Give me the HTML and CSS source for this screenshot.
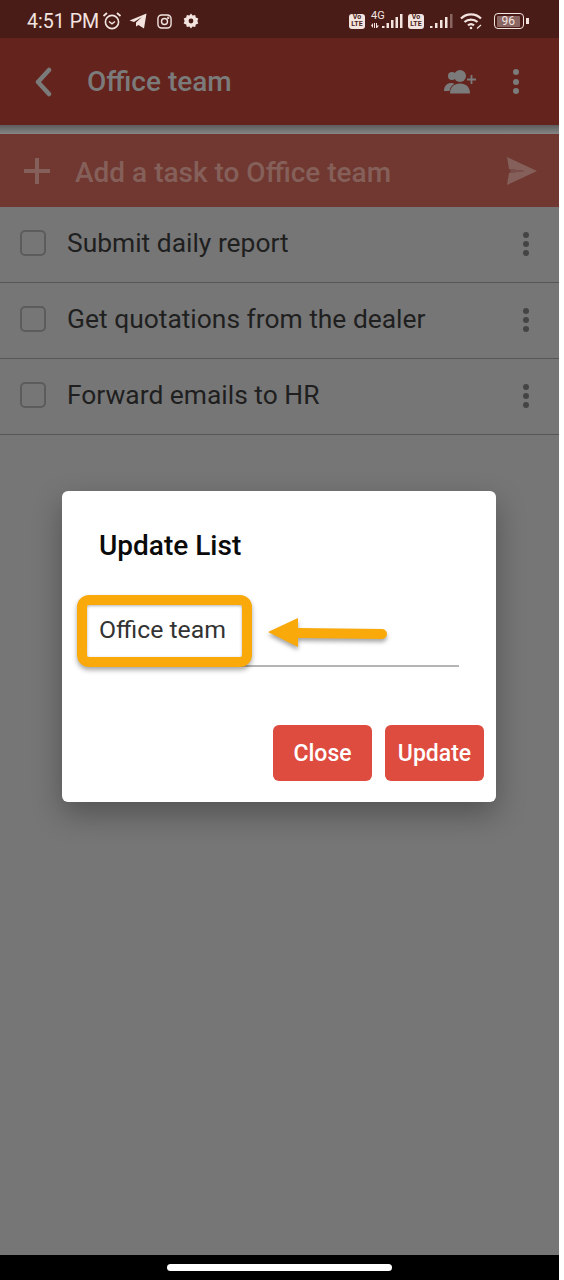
FILE: index.html
```html
<!DOCTYPE html>
<html lang="en">
<head>
    <meta charset="UTF-8">
    <meta name="viewport" content="width=device-width, initial-scale=1.0">
    <title>Update List</title>
    <link rel="stylesheet" href="styles.css">
</head>
<body>
    <div class="phone">
        <!-- Status bar -->
        <div class="status-bar">
            <span class="clock">4:51 PM</span>
            <svg class="status-icon alarm" width="20" height="20" viewBox="0 0 20 20" fill="none" stroke="#f3e4e0">
                <circle cx="10" cy="11" r="6.6" stroke-width="1.6"/>
                <path d="M7 10.5l3 2.4 3-2.4" stroke-width="1.4"/>
                <path d="M1.5 5l3.5-3M18.5 5L15 2" stroke-width="1.8"/>
            </svg>
            <svg class="status-icon telegram" width="18" height="16" viewBox="0 0 18 16">
                <path d="M0.5 7.5L17.5 0.5 15 15.5 9.5 12 7 13.5 7 9.5 13 4 5 9z" fill="#f3e4e0"/>
            </svg>
            <svg class="status-icon insta" width="15" height="15" viewBox="0 0 16 16" fill="none" stroke="#f3e4e0" stroke-width="1.5">
                <rect x="1" y="1" width="14" height="14" rx="4"/>
                <circle cx="8" cy="8" r="3.2"/>
                <circle cx="12" cy="4" r="0.5"/>
            </svg>
            <svg class="status-icon gear" width="16" height="16" viewBox="0 0 16 16">
                <path d="M8 0.5l1.6 2 2.6-.6.6 2.6 2.5 1-.9 2.5.9 2.5-2.5 1-.6 2.6-2.6-.6L8 15.5l-1.6-2-2.6.6-.6-2.6-2.5-1 .9-2.5-.9-2.5 2.5-1 .6-2.6 2.6.6z" fill="#f3e4e0"/>
                <circle cx="8" cy="8" r="2.4" fill="#4a1c17"/>
            </svg>
            <div class="status-right">
                <span class="volte">Vo<br>LTE</span>
                <div class="net-block">
                    <span class="net-type">4G</span>
                    <svg class="net-arrows" width="8" height="5" viewBox="0 0 8 5" fill="#f3e4e0">
                        <path d="M0 2.5L2 0 2 5zM3 0h1v5H3zM5 0h1v5H5zM6 2.500L8 2.500 6 5z"/>
                    </svg>
                </div>
                <svg class="bars" width="22" height="16" viewBox="0 0 22 16" fill="#f3e4e0">
                    <rect x="0" y="13" width="2.5" height="2"/>
                    <rect x="4.5" y="10" width="2.5" height="5"/>
                    <rect x="9" y="7" width="2.5" height="8"/>
                    <rect x="13.5" y="4" width="2.5" height="11"/>
                    <rect x="18" y="1" width="2.5" height="14"/>
                </svg>
                <span class="volte volte-second">Vo<br>LTE</span>
                <svg class="bars bars-second" width="24" height="16" viewBox="0 0 24 16" fill="#f3e4e0">
                    <rect x="0" y="13" width="2.5" height="2"/>
                    <rect x="5" y="10" width="2.5" height="5"/>
                    <rect x="10" y="7" width="2.5" height="8"/>
                    <rect x="15" y="4" width="2.5" height="11"/>
                    <rect x="20" y="1" width="2.5" height="14" fill="#8a6662"/>
                </svg>
                <svg class="wifi" width="24" height="18" viewBox="0 0 24 18" fill="none" stroke="#f3e4e0" stroke-width="2.2">
                    <path d="M1 6.500C6.500 1 15.500 1 21 6.500"/>
                    <path d="M4.500 10c3.500-3.300 9.500-3.300 13 0"/>
                    <path d="M8 13.300c1.800-1.500 4.200-1.500 6 0"/>
                    <circle cx="11" cy="16" r="1.300" fill="#f3e4e0" stroke="none"/>
                    <path d="M17 16.500l4-3.500" stroke-width="1.2"/>
                </svg>
                <div class="battery"><span class="battery-level">96</span></div>
                <span class="battery-tip"></span>
            </div>
        </div>

        <!-- App bar -->
        <div class="app-bar">
            <svg class="back-icon" width="20" height="30" viewBox="0 0 20 30" fill="none" stroke="#7b7b7b" stroke-width="4.5" stroke-linecap="round" stroke-linejoin="round">
                <path d="M16 3L5 15l11 12"/>
            </svg>
            <div class="app-title">Office team</div>
            <svg class="people-icon" width="32" height="24" viewBox="0 0 32 24" fill="#7b7b7b">
                <circle cx="8" cy="6" r="4"/>
                <path d="M0 21c0-5 3-8 7-8 1.500 0 2.500.3 3.500.8C7.500 15.500 6 18 5.500 21z"/>
                <circle cx="16" cy="6" r="6"/>
                <path d="M6 23.500c0-6.500 4-10 10-10s10 3.500 10 10z"/>
                <path d="M23 8.600h3.600V5h1.800v3.600H32v1.800h-3.600V14h-1.800v-3.600H23z"/>
            </svg>
            <div class="dots dots-app"><span></span><span></span><span></span></div>
        </div>
        <div class="gap-strip"></div>

        <!-- Add task -->
        <div class="add-task">
            <svg class="plus-icon" width="28" height="28" viewBox="0 0 28 28" fill="#85605a">
                <rect x="12" y="1" width="4" height="26"/>
                <rect x="1" y="12" width="26" height="4"/>
            </svg>
            <div class="add-text">Add a task to Office team</div>
            <svg class="send-icon" width="32" height="30" viewBox="0 0 32 30">
                <path d="M1 1L31 15 1 29 3 17 19 15 3 13z" fill="#85605a"/>
                <path d="M3 13L19 15 3 17 5 15z" fill="#7a4f4a"/>
            </svg>
        </div>

        <!-- Tasks -->
        <div class="task-list">
            <div class="task-row">
                <span class="check"></span>
                <span class="task-text">Submit daily report</span>
                <div class="dots dots-task"><span></span><span></span><span></span></div>
            </div>
            <div class="task-row">
                <span class="check"></span>
                <span class="task-text">Get quotations from the dealer</span>
                <div class="dots dots-task"><span></span><span></span><span></span></div>
            </div>
            <div class="task-row">
                <span class="check"></span>
                <span class="task-text">Forward emails to HR</span>
                <div class="dots dots-task"><span></span><span></span><span></span></div>
            </div>
        </div>

        <!-- Dialog -->
        <div class="dialog-area">
            <div class="dialog">
                <div class="dialog-title">Update List</div>
                <div class="field">
                    <div class="highlight-box"></div>
                    <div class="field-value">Office team</div>
                    <svg class="arrow" width="122" height="34" viewBox="0 0 122 34">
                        <path d="M1 16L31 2 31 12 115 13a5 5 0 0 1 0 10L31 22 31 31z" fill="#f9aa0a"/>
                    </svg>
                </div>
                <div class="dialog-actions">
                    <button class="dialog-btn">Close</button>
                    <button class="dialog-btn">Update</button>
                </div>
            </div>
        </div>

        <!-- Nav bar -->
        <div class="nav-bar"><span class="nav-pill"></span></div>
    </div>
</body>
</html>
```

FILE: styles.css
```css
* {
    margin: 0;
    padding: 0;
    box-sizing: border-box;
}

body {
    font-family: Roboto, 'Liberation Sans', sans-serif;
    background-color: #fff;
    width: 564px;
    height: 1280px;
    overflow: hidden;
}

.phone {
    width: 559px;
    height: 1280px;
    display: flex;
    flex-direction: column;
    background-color: #767676;
}

/* Status bar */
.status-bar {
    height: 38px;
    background-color: #4a1c17;
    color: #f3e4e0;
    display: flex;
    align-items: center;
    padding: 4px 30px 0 27px;
}

.clock {
    font-size: 19.6px;
    margin-right: 3px;
}

.status-icon {
    flex: none;
}

.telegram {
    margin-left: 7px;
}

.insta {
    margin-left: 10px;
}

.gear {
    margin-left: 11px;
}

.status-right {
    margin-left: auto;
    display: flex;
    align-items: center;
}

.volte {
    width: 16px;
    height: 15px;
    background-color: #f3e4e0;
    color: #4a1c17;
    border-radius: 3px;
    font-size: 7px;
    line-height: 7.5px;
    font-weight: bold;
    text-align: center;
}

.volte-second {
    margin-left: 4px;
}

.net-block {
    width: 11px;
    height: 20px;
    margin-left: 6px;
    display: flex;
    flex-direction: column;
}

.net-type {
    font-size: 11px;
    line-height: 10px;
}

.net-arrows {
    margin-top: 2px;
}

.bars {
    flex: none;
}

.bars-second {
    margin-left: 6px;
}

.wifi {
    margin-left: 6px;
}

.battery {
    width: 30px;
    height: 16px;
    margin-left: 10px;
    border: 1.5px solid #f3e4e0;
    border-radius: 4px;
    padding: 1.5px;
}

.battery-level {
    display: block;
    height: 100%;
    width: 94%;
    background-color: #8a6662;
    border-radius: 1px;
    color: #f3e4e0;
    font-size: 12px;
    line-height: 10px;
    text-align: center;
}

.battery-tip {
    width: 3px;
    height: 6px;
    margin-left: 2px;
    background-color: #f3e4e0;
}

/* App bar */
.app-bar {
    height: 87px;
    background-color: #65231d;
    display: flex;
    align-items: center;
    padding: 0 40px 0 33px;
}

.back-icon {
    flex: none;
}

.app-title {
    font-size: 28px;
    font-weight: 500;
    color: #7b7b7b;
    margin-left: 34px;
}

.people-icon {
    margin-left: auto;
}

.dots {
    display: flex;
    flex-direction: column;
}

.dots span {
    border-radius: 50%;
}

.dots-app {
    gap: 3.5px;
    margin-left: 37px;
}

.dots-app span {
    width: 6px;
    height: 6px;
    background-color: #7b7b7b;
}

.gap-strip {
    height: 9px;
    background: linear-gradient(#5d5d5d, #868686);
}

/* Add task */
.add-task {
    height: 73px;
    background-color: #703830;
    display: flex;
    align-items: center;
    padding: 0 21px 0 23px;
}

.plus-icon {
    flex: none;
}

.add-text {
    font-size: 28px;
    font-weight: 500;
    color: #85605a;
    margin: 3px 0 0 24px;
}

.send-icon {
    margin-left: auto;
}

/* Task list */
.task-list {
    display: flex;
    flex-direction: column;
}

.task-row {
    height: 76px;
    display: flex;
    align-items: center;
    border-bottom: 1px solid #565656;
    padding: 0 30px 2px 20px;
}

.check {
    width: 26px;
    height: 26px;
    border: 2px solid #5c5c5c;
    border-radius: 5px;
    flex: none;
    margin-bottom: 1px;
}

.task-text {
    font-size: 26.4px;
    color: #1f1f1f;
    margin: 0 0 2px 21px;
}

.dots-task {
    margin-left: auto;
    gap: 3px;
}

.dots-task span {
    width: 6px;
    height: 6px;
    background-color: #444;
}

/* Dialog */
.dialog-area {
    flex: 1;
    padding: 56px 0 0 62px;
}

.dialog {
    width: 434px;
    height: 311px;
    background-color: #fff;
    border-radius: 6px;
    box-shadow: 0 12px 30px rgba(0, 0, 0, 0.3);
    display: flex;
    flex-direction: column;
    padding: 38px 12px 21px 37px;
}

.dialog-title {
    font-size: 28px;
    font-weight: 500;
    line-height: 34px;
    color: #0a0a0a;
}

.field {
    position: relative;
    margin-top: 50px;
    width: 360px;
    height: 54px;
    border-bottom: 2px solid #b5b5b5;
}

.field-value {
    position: relative;
    font-size: 24.8px;
    line-height: 32px;
    color: #333;
    padding-top: 1px;
}

/* Annotation drawn over the field */
.highlight-box {
    position: absolute;
    left: -22px;
    top: -18px;
    width: 175px;
    height: 72px;
    background-color: #fff;
    border: 10px solid #f9aa0a;
    border-radius: 12px;
    box-shadow: 0 3px 5px rgba(0, 0, 0, 0.35), inset 0 1px 3px rgba(0, 0, 0, 0.3);
}

.arrow {
    position: absolute;
    left: 168px;
    top: 3px;
    filter: drop-shadow(0 3px 2px rgba(0, 0, 0, 0.35));
}

.dialog-actions {
    margin-top: auto;
    display: flex;
    justify-content: flex-end;
    gap: 13px;
}

.dialog-btn {
    height: 56px;
    width: 99px;
    border: none;
    border-radius: 6px;
    background-color: #dd4c3f;
    color: #fff;
    font-family: Roboto, 'Liberation Sans', sans-serif;
    font-size: 23px;
    font-weight: 500;
}

/* Nav bar */
.nav-bar {
    height: 25px;
    background-color: #000;
    display: flex;
    justify-content: center;
    padding-top: 9px;
}

.nav-pill {
    width: 225px;
    height: 7px;
    background-color: #fff;
    border-radius: 4px;
}
```
